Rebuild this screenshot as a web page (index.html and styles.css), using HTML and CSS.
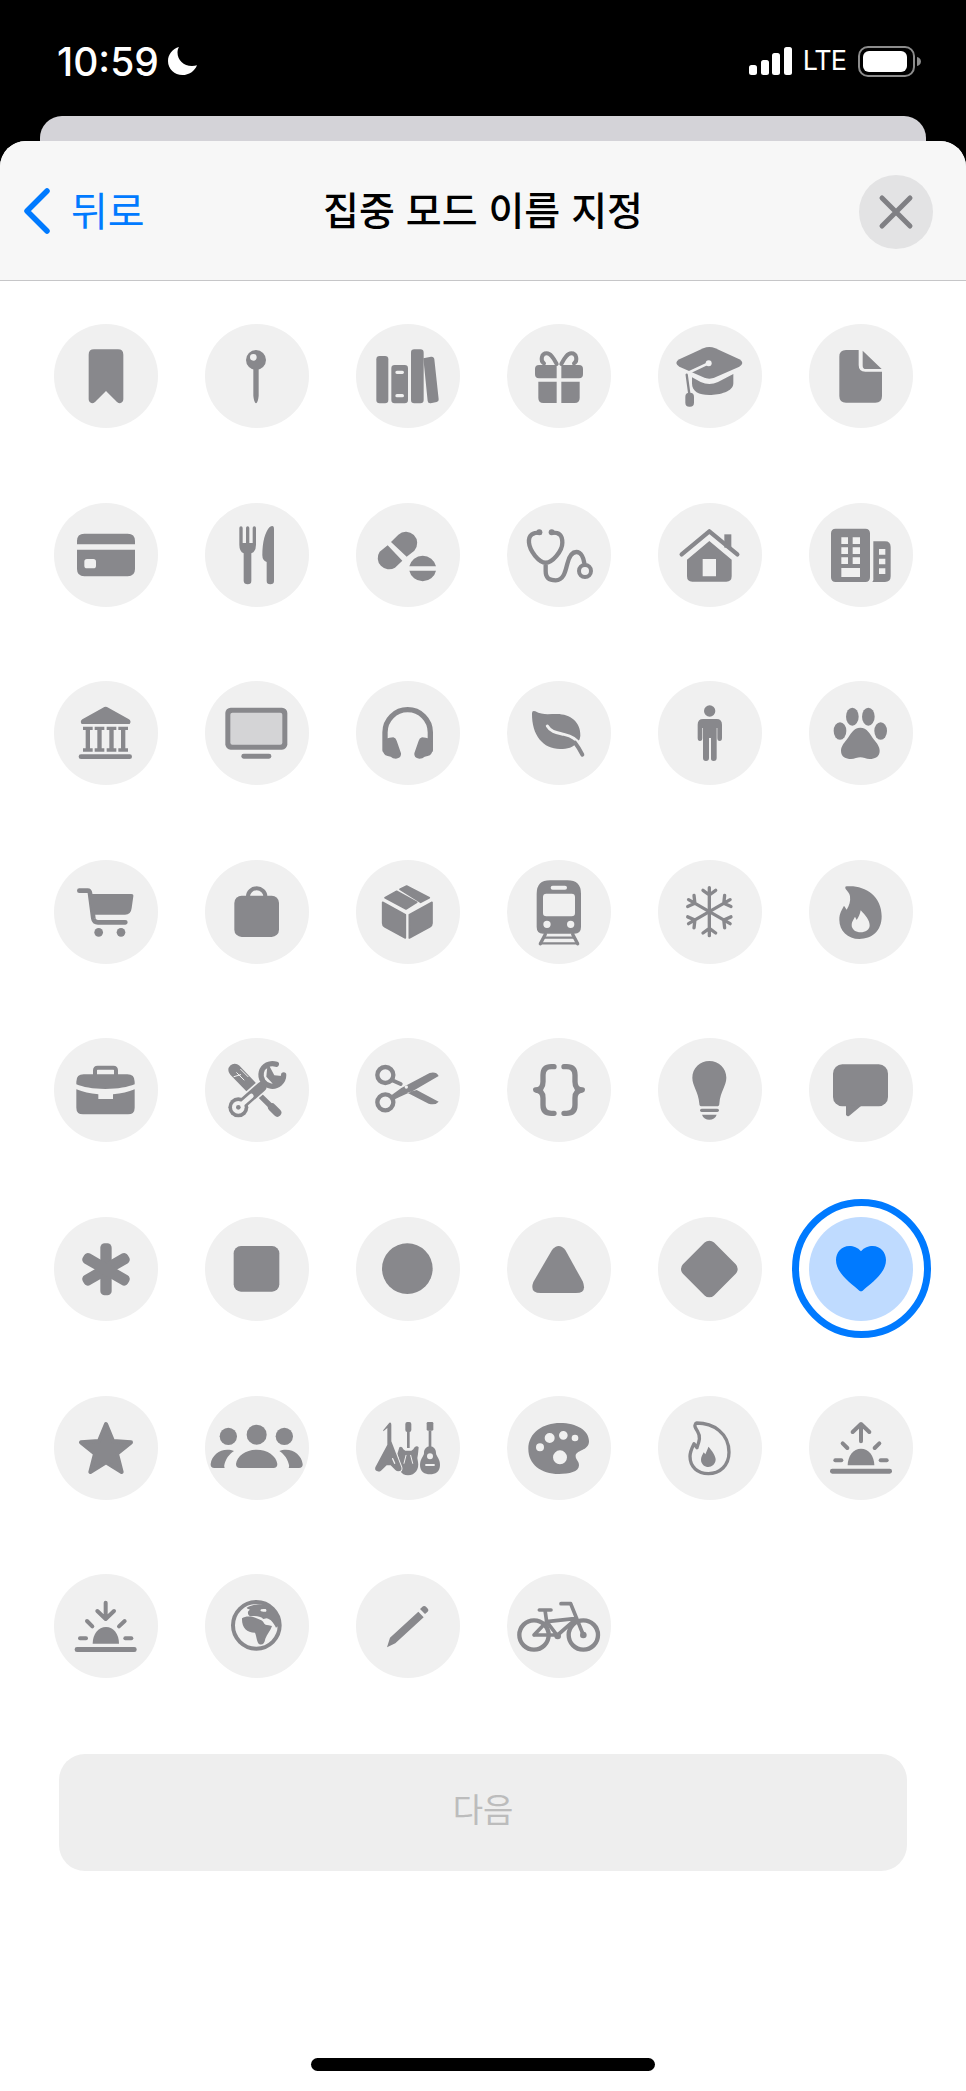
FILE: index.html
```html
<!DOCTYPE html>
<html lang="ko">
<head>
  <meta charset="UTF-8" />
  <title>집중 모드 이름 지정</title>
  <link rel="stylesheet" href="styles.css">
</head>
<body>
  <!-- status bar -->
  <div class="status">
    <div class="status-left">
      <span class="time">10:59</span>
      <svg class="moon" viewBox="0 0 30 28"><path d="M11 0C4.500 1.800 0 7.500 0 14c0 8 6.500 14 14.500 14 6.500 0 12-3.800 14.500-9.800-1.500.5-3.200.8-5 .8C15.500 19 9.500 13 9.500 5.500c0-2 .5-3.900 1.500-5.500z"/></svg>
    </div>
    <div class="status-right">
      <svg class="signal" viewBox="0 0 43 28">
        <rect x="0" y="18" width="8" height="10" rx="2.500"/>
        <rect x="12" y="13" width="8" height="15" rx="2.500"/>
        <rect x="23" y="6" width="8" height="22" rx="2.500"/>
        <rect x="35" y="0" width="8" height="28" rx="2.500"/>
      </svg>
      <span class="lte">LTE</span>
      <svg class="battery" viewBox="0 0 63 31">
        <rect x="1" y="1" width="55" height="29" rx="9" fill="none" stroke="#8c8c8c" stroke-width="2"/>
        <rect x="5" y="5" width="44" height="21" rx="6" fill="#fff"/>
        <path d="M59 11c2 .5 4 2 4 4.500S61 19.500 59 20z" fill="#8c8c8c"/>
      </svg>
    </div>
  </div>

  <div class="back-card"></div>

  <div class="sheet">
    <div class="header">
      <a class="back" href="#">
        <svg class="chevron" viewBox="0 0 28 46"><path d="M24 3L4 23l20 20"/></svg>
        <span>뒤로</span>
      </a>
      <div class="title">집중 모드 이름 지정</div>
      <div class="close-slot">
        <div class="close">
          <svg viewBox="0 0 74 74"><path d="M23 23l28 28M51 23L23 51"/></svg>
        </div>
      </div>
    </div>

    <div class="icons">
      <!-- row 1 -->
      <div class="icon"><svg viewBox="71 72 312 312"><path d="M175 164q0-16 16-16h72q16 0 16 16v134c0 11-11 15-19 8l-33-33-33 33c-8 7-19 3-19-8z"/></svg></div>
      <div class="icon"><svg viewBox="525 72 312 312"><path fill-rule="evenodd" d="M678 150a30 30 0 1 1 0 60 30 30 0 1 1 0-60zM670 162a10 10 0 1 0 0 20 10 10 0 1 0 0-20z"/><path d="M670 205v80c0 10 4 25 8 25s8-15 8-25v-80z"/></svg></div>
      <div class="icon"><svg viewBox="978 72 312 312"><rect x="1039" y="168" width="36" height="142" rx="10"/><path fill-rule="evenodd" d="M1094 195h30q10 0 10 10v95q0 10-10 10h-30q-10 0-10-10v-95q0-10 10-10zM1101 212q-5 0-5 5t5 5h16q5 0 5-5t-5-5zM1101 282q-5 0-5 5t5 5h16q5 0 5-5t-5-5z"/><rect x="1143" y="148" width="38" height="162" rx="10"/><path d="M1180 175l23-5q9-1 10 8l13 120q1 7-6 8l-18 4q-8 1-9-7z"/></svg></div>
      <div class="icon"><svg viewBox="81 72 312 312"><path class="line w12" d="M230 192c-8-14-16-32-30-32-16 0-20 22-8 30M244 192c8-14 16-32 30-32 16 0 20 22 8 30"/><path d="M177 195h53v40h-53q-12 0-12-12v-16q0-12 12-12zM244 195h53q12 0 12 12v16q0 12-12 12h-53zM175 245h55v64h-40q-15 0-15-15zM244 245h55v49q0 15-15 15h-40z"/></svg></div>
      <div class="icon"><svg viewBox="534 72 312 312"><path d="M670 145q18-8 36 0l72 33q18 11 0 22l-72 32q-18 8-36 0l-72-32q-18-11 0-22z"/><path d="M636 232l26 14q26 12 52 0l46-24v28c0 25-40 35-72 35s-52-10-52-35z"/><path class="cut-line w8" d="M685 190l-68 32"/><circle class="cut" cx="686" cy="190" r="9"/><path class="line w7" d="M620 224l8 58"/><rect x="616" y="278" width="26" height="42" rx="12"/></svg></div>
      <div class="icon"><svg viewBox="987 72 312 312"><path d="M1078 170q0-20 20-20h38v45q0 20 20 20h50v73q0 20-20 20h-88q-20 0-20-20zM1148 152l57 55h-47q-10 0-10-10z"/></svg></div>

      <!-- row 2 -->
      <div class="icon"><svg viewBox="71 608 312 312"><path fill-rule="evenodd" d="M140 732v-10q0-22 22-22h130q22 0 22 22v10zM140 748h174v58q0 22-22 22H162q-22 0-22-22zM170 776q-8 0-8 8v12q0 8 8 8h19q8 0 8-8v-12q0-8-8-8z"/></svg></div>
      <div class="icon"><svg viewBox="525 608 312 312"><path d="M628 683q0-5 5-5t5 5v45h10v-45q0-5 5-5t5 5v45h10v-45q0-5 5-5t5 5v50q0 20-14 26v83q0 10-11 10t-12-10v-83q-13-6-13-26zM732 686v156q0 10-11 10t-11-10v-57q-13-5-13-20c0-40 8-70 22-85q13-8 13 6z"/></svg></div>
      <div class="icon"><svg viewBox="978 608 312 312"><path d="M1083 725l22-22a34 34 0 0 1 48 48l-23 18zM1073 735l44 46-22 21a34 34 0 0 1-46-48zM1138 798a41 41 0 0 1 80 0zM1138 811h80a41 41 0 0 1-80 0z"/></svg></div>
      <div class="icon"><svg viewBox="81 608 312 312"><path class="line w13" d="M180 697c-20 0-35 5-33 30 2 25 30 60 50 60s50-35 50-60c0-25-10-30-30-30M197 787v25c0 25 15 28 30 28 25 0 30-30 35-50s12-35 27-35c15 0 22 20 24 33"/><circle cx="178" cy="696" r="9"/><circle cx="215" cy="696" r="9"/><circle class="line w12" cx="315" cy="812" r="18"/></svg></div>
      <div class="icon"><svg viewBox="534 608 312 312"><rect x="733" y="702" width="21" height="40"/><path class="line w13" d="M605 762l83-69 84 69"/><path fill-rule="evenodd" d="M688 722l67 56v50q0 16-16 16H637q-16 0-16-16v-50zM668 776v52h40v-52z"/></svg></div>
      <div class="icon"><svg viewBox="987 608 312 312"><path fill-rule="evenodd" d="M1067 685h89q14 0 14 14v132q0 14-14 14h-89q-14 0-14-14V699q0-14 14-14zM1084 711v20h20v-20zM1118 711v20h22v-20zM1084 741v20h20v-20zM1118 741v20h22v-20zM1084 771v20h20v-20zM1118 771v20h22v-20zM1084 803v27h56v-27zM1180 723h35q17 0 17 17v88q0 17-17 17h-38q5-5 3-12zM1197 746v17h19v-17zM1197 775v17h19v-17zM1197 804v17h19v-17z"/></svg></div>

      <!-- row 3 -->
      <div class="icon"><svg viewBox="71 63 312 312"><path d="M226 140q4 0 8 3l62 35q8 6 2 14H154q-6-8 2-14l62-35q4-3 8-3z"/><rect x="145" y="283" width="160" height="14" rx="7"/><path d="M158 200h29v10h-8v55h8v10h-29v-10h8v-55h-8zM193 200h29v10h-8v55h8v10h-29v-10h8v-55h-8zM229 200h29v10h-8v55h8v10h-29v-10h8v-55h-8zM264 200h29v10h-8v55h8v10h-29v-10h8v-55h-8z"/></svg></div>
      <div class="icon"><svg viewBox="525 63 312 312"><rect x="586" y="143" width="186" height="126" rx="16"/><rect class="screen" x="601" y="158" width="156" height="96" rx="6"/><rect x="634" y="281" width="90" height="15" rx="7"/></svg></div>
      <div class="icon"><svg viewBox="978 63 312 312"><path class="line w16" d="M1065 270v-53a68 68 0 0 1 136 0v53"/><path d="M1060 245q5-12 30-13 8 2 10 10l13 38q2 14-15 16-10 0-16-6-20-2-22-14zM1206 245q-5-12-30-13-8 2-10 10l-13 38q-2 14 15 16 10 0 16-6 20-2 22-14z"/></svg></div>
      <div class="icon"><svg viewBox="81 63 312 312"><path d="M156 160q0-10 10-6c20 12 40 8 65 8 40 0 72 25 70 65-1 10-4 15-8 18-14 18-30 22-53 22-50 0-85-40-84-107z"/><path class="cut-line w9" d="M202 198c10 18 30 20 50 25 25 6 36 14 50 32"/><path class="line w12" d="M285 248c8 10 15 22 22 36"/></svg></div>
      <div class="icon"><svg viewBox="534 63 312 312"><circle cx="689" cy="153" r="17"/><path d="M668 177h42q16 0 16 17v40q0 9-7 9t-7-9v-30h-2v90q0 9-9 9t-8-9v-60h-6v60q0 9-9 9t-9-9v-90h-2v30q0 9-7 9t-7-9v-40q0-17 16-17z"/></svg></div>
      <div class="icon"><svg viewBox="987 63 312 312"><ellipse cx="1117" cy="170" rx="19" ry="27"/><ellipse cx="1165" cy="170" rx="19" ry="27"/><ellipse cx="1080" cy="213" rx="19" ry="26"/><ellipse cx="1202" cy="213" rx="19" ry="26"/><path d="M1141 203c20 0 30 20 40 35 10 12 18 22 18 35 0 18-15 24-30 24-10 0-20-5-28-5s-18 5-28 5c-15 0-30-6-30-24 0-13 8-23 18-35 10-15 20-35 40-35z"/></svg></div>

      <!-- row 4 -->
      <div class="icon"><svg viewBox="71 599 312 312"><path class="line w14" d="M147 691h25q6 0 7 8l10 75q2 12 14 12h82"/><path d="M178 701h125q7 0 6 7l-5 35q-2 20-20 20h-98z"/><circle cx="205" cy="816" r="13"/><circle cx="272" cy="816" r="13"/></svg></div>
      <div class="icon"><svg viewBox="525 599 312 312"><rect x="613" y="706" width="134" height="124" rx="22"/><path class="line w12" d="M654 708a26 24 0 0 1 52 0"/></svg></div>
      <div class="icon"><svg viewBox="978 599 312 312"><path class="solid-join" d="M1065 712l35-19 60 33-32 20zM1110 687l20-10 68 35-26 14zM1058 726l68 37v70l-62-34q-6-3-6-10zM1138 763l68-37v63q0 7-6 10l-62 34z"/></svg></div>
      <div class="icon"><svg viewBox="81 599 312 312"><path fill-rule="evenodd" d="M170 700q0-40 40-40h52q41 0 41 40v100q0 20-20 20h-94q-19 0-19-20zM218 676q-6 0-6 6t6 6h37q6 0 6-6t-6-6zM199 700q-10 0-10 10v48q0 10 10 10h76q10 0 10-10v-48q0-10-10-10zM201 781a11 11 0 1 0 0 22 11 11 0 1 0 0-22zM272 781a11 11 0 1 0 0 22 11 11 0 1 0 0-22z"/><path class="line w10" d="M196 822l-15 28M278 822l15 28"/><path class="line w7" d="M192 832h90M182 849h110"/></svg></div>
      <div class="icon"><svg viewBox="534 599 312 312">
        <g class="line w10">
          <g id="spoke"><path d="M688 754v-72M688 704l-19-14M688 704l19-14"/></g>
          <use href="#spoke" transform="rotate(60 688 754)"/>
          <use href="#spoke" transform="rotate(120 688 754)"/>
          <use href="#spoke" transform="rotate(180 688 754)"/>
          <use href="#spoke" transform="rotate(240 688 754)"/>
          <use href="#spoke" transform="rotate(300 688 754)"/>
        </g>
      </svg></div>
      <div class="icon"><svg viewBox="987 599 312 312"><path fill-rule="evenodd" d="M1100 678c50-5 105 25 105 90 0 45-30 68-67 68-35 0-60-25-60-58 0-20 8-30 14-42l8 12c8-12 12-25 10-40-2-12-12-18-14-24q-2-6 4-6zM1142 750c15 15 27 30 27 45 0 14-13 21-27 21s-27-8-27-22c0-10 5-15 10-25l5 10c6-8 10-18 12-29z"/></svg></div>

      <!-- row 5 -->
      <div class="icon"><svg viewBox="71 54 312 312"><path class="line w12" d="M194 165v-14q0-8 8-8h47q8 0 8 8v14"/><path d="M138 185q0-22 22-22h131q22 0 22 22v8c-20 8-50 14-88 14s-68-6-87-14zM138 208c20 8 40 12 66 15v14h44v-14c26-3 46-7 65-15v55q0 20-20 20H158q-20 0-20-20z"/></svg></div>
      <div class="icon"><svg viewBox="525 54 312 312"><path class="line w38" d="M614 150l48 50"/><path class="cut-line w3" d="M612 170l20-6M620 158l22 22M632 148l22 22"/><path class="line w16" d="M664 201l58 57"/><path class="line w24" d="M726 262l16 16"/><path class="cut-line w40" d="M695 200l-70 62"/><path class="line w30" d="M695 200l-70 62"/><circle cx="625" cy="262" r="30"/><circle class="cut" cx="625" cy="262" r="19"/><path class="cut-line w14" d="M664 228l-32 28"/><circle cx="625" cy="262" r="7"/><path class="line w16" d="M739 133a34 34 0 1 0 22 32"/><path d="M713 128l20 38 22 2-4 18-20 8-22-24z"/></svg></div>
      <div class="icon"><svg viewBox="978 54 312 312"><circle class="line w13" cx="1066" cy="165" r="24"/><circle class="line w13" cx="1066" cy="247" r="24"/><path class="line w12" d="M1085 180l27 12"/><path fill-rule="evenodd" d="M1090 240l-6-14 30-22 85-45q20-5 27 9l-76 44-40 18zM1129 196a5 5 0 1 0 0 10 5 5 0 1 0 0-10zM1132 218l28-8 66 35q-10 12-30 6z"/></svg></div>
      <div class="icon"><svg viewBox="81 54 312 312"><path class="line w16" d="M222 140h-8q-25 0-25 25v20q0 24-22 25 22 1 22 25v20q0 25 25 25h8M252 140h8q25 0 25 25v20q0 24 22 25-22 1-22 25v20q0 25-25 25h-8"/></svg></div>
      <div class="icon"><svg viewBox="534 54 312 312"><path d="M688 123c28 0 51 22 51 50 0 25-18 40-21 78q0 8-8 8h-44q-8 0-8-8c-3-38-21-53-21-78 0-28 23-50 51-50z"/><rect x="660" y="266" width="57" height="10" rx="5"/><path d="M666 284h44c-3 10-12 15-22 15s-19-5-22-15z"/></svg></div>
      <div class="icon"><svg viewBox="987 54 312 312"><rect x="1059" y="133" width="165" height="126" rx="28"/><path d="M1098 255v28q2 9 10 4l36-30z"/></svg></div>

      <!-- row 6 -->
      <div class="icon"><svg viewBox="71 589 312 312"><rect x="210" y="668" width="34" height="156" rx="13"/><rect x="210" y="668" width="34" height="156" rx="13" transform="rotate(60 227 746)"/><rect x="210" y="668" width="34" height="156" rx="13" transform="rotate(120 227 746)"/></svg></div>
      <div class="icon"><svg viewBox="525 589 312 312"><rect x="611" y="676" width="137" height="137" rx="22"/></svg></div>
      <div class="icon"><svg viewBox="978 589 312 312"><circle cx="1132" cy="744" r="76"/></svg></div>
      <div class="icon"><svg viewBox="81 589 312 312"><path d="M216 688q20-24 40 0l52 94q14 35-20 35H182q-34 0-22-33z"/></svg></div>
      <div class="icon"><svg viewBox="534 589 312 312"><rect x="622" y="679" width="132" height="132" rx="20" transform="rotate(45 688 745)"/></svg></div>
      <div class="icon selected"><svg viewBox="987 589 312 312"><path d="M1143 692c10-12 22-16 35-16 24 0 40 20 40 42 0 40-45 70-70 92q-5 4-10 0c-25-22-70-52-70-92 0-22 16-42 40-42 13 0 25 4 35 16z"/></svg></div>

      <!-- row 7 -->
      <div class="icon"><svg viewBox="71 44 312 312"><path class="solid-join big" d="M227 128l21 51 54 4-42 34 14 55-47-29-47 29 14-55-42-34 54-4z"/></svg></div>
      <div class="icon"><svg viewBox="525 44 312 312"><circle cx="595" cy="165" r="26"/><circle cx="680" cy="160" r="30"/><circle cx="763" cy="165" r="26"/><path d="M630 260q-12 0-12-12c3-25 30-43 62-43s59 18 62 43q0 12-12 12zM553 260q-12 0-11-12c3-25 25-43 50-43 8 0 14 1 20 4-15 10-26 25-29 42q-1 5 1 9zM807 260q12 0 11-12c-3-25-25-43-50-43-8 0-14 1-20 4 15 10 26 25 29 42q1 5-1 9z"/></svg></div>
      <div class="icon"><svg viewBox="978 44 312 312"><rect x="1126" y="122" width="18" height="30" rx="6"/><rect x="1131" y="150" width="8" height="50"/><path d="M1108 198q8-6 12 6l6 4h18l6-4c4-10 12-12 16-6l-2 20q-4 12 0 24c4 20-8 40-30 40s-30-20-28-40q2-12-4-24z"/><path class="cut-line w3" d="M1128 222l-6 24M1142 222l6 24"/><path class="halo" d="M1072 190v-50l-12 10q-2-3 2-6l16-20q6-2 6 6v50l30 78q3 12-9 12-5 0-9-4l-14-14h-12l-17 16q-5 4-10 2-10-2-7-12z"/><path class="cut-line w4" d="M1088 232l6 14"/><rect x="1190" y="122" width="20" height="26" rx="4"/><rect x="1196" y="148" width="8" height="50"/><path fill-rule="evenodd" d="M1200 195c11 0 18 9 18 20 0 10 12 16 12 36 0 20-14 28-30 28s-30-8-30-28c0-20 12-26 12-36 0-11 7-20 18-20zM1200 216a9 9 0 1 0 0 18 9 9 0 1 0 0-18zM1186 248v6h28v-6z"/></svg></div>
      <div class="icon"><svg viewBox="81 44 312 312"><path fill-rule="evenodd" d="M240 125c50 0 87 22 87 55 0 30-40 25-40 45 0 10 10 15 10 27 0 20-30 26-60 26-55 0-92-30-92-75 0-50 45-78 95-78zM209 155a15 15 0 1 0 0 30 15 15 0 1 0 0-30zM250 149a13 13 0 1 0 0 26 13 13 0 1 0 0-26zM285 160a10 10 0 1 0 0 20 10 10 0 1 0 0-20zM180 186a12 12 0 1 0 0 24 12 12 0 1 0 0-24zM240 207a21 21 0 1 0 0 42 21 21 0 1 0 0-42z"/></svg></div>
      <div class="icon"><svg viewBox="534 44 312 312"><path class="line w10" d="M650 125c50 0 97 30 97 88 0 40-28 64-62 64-32 0-55-20-55-52 0-15 8-30 12-38l9 12c6-18 12-32 2-48-6-10-10-15-8-20q2-6 5-6z"/><path d="M685 196c10 10 22 28 22 38 0 15-12 23-22 23s-22-8-22-22c0-8 4-14 8-22l5 6c3-8 7-15 9-23z"/></svg></div>
      <div class="icon"><svg viewBox="987 44 312 312"><rect x="1050" y="262" width="186" height="15" rx="7"/><path d="M1103 252c0-28 17-50 40-50s40 22 40 50z"/><rect x="1060" y="231" width="30" height="12" rx="6"/><rect x="1196" y="231" width="30" height="12" rx="6"/><path class="line w12" d="M1088 186l14 14M1198 186l-14 14M1143 180v-50M1118 152l25-24 25 24"/></svg></div>

      <!-- row 8 -->
      <div class="icon"><svg viewBox="71 579 312 312"><rect x="133" y="798" width="186" height="15" rx="7"/><path d="M187 788c0-28 17-50 40-50s39 22 39 50z"/><rect x="143" y="766" width="30" height="12" rx="6"/><rect x="279" y="766" width="30" height="12" rx="6"/><path class="line w12" d="M170 720l16 16M283 720l-17 16M226 665v47M201 690l25 24 25-24"/></svg></div>
      <div class="icon"><svg viewBox="525 579 312 312"><circle class="line w12" cx="679" cy="733" r="70"/><path fill-rule="evenodd" d="M650 680c25-14 55-14 75 0 15 10 25 30 27 50l-14 10c-8-15-15-25-28-28l-10 2c-10-10-25-10-40-8-8-5-8-15-2-18 5-4-8-4-8-8zM700 684q-9 0-9 4t9 4h8q3-4-1-8z"/><path d="M636 712c10-8 30-6 40-2l18 8c10 5 5 15 22 15l10 2c-5 15-15 25-20 38-3 15-8 20-18 17-8-5-8-25-13-35-25 0-40-15-39-43z"/></svg></div>
      <div class="icon"><svg viewBox="978 579 312 312"><path d="M1071 799l9-29 85-78 16 17-85 78zM1170 684l9-8q5-3 9 1l6 7q3 4-1 8l-8 7z"/></svg></div>
      <div class="icon"><svg viewBox="81 579 312 312"><circle class="line w13" cx="162" cy="762" r="44"/><circle class="line w13" cx="310" cy="762" r="44"/><path class="line w11" d="M162 762h71l57-50-90 10 33 43M200 722l-38 40M310 762l-38-94h-29M178 687h35M195 687l5 35"/><circle cx="310" cy="762" r="10"/><circle cx="233" cy="765" r="10"/></svg></div>
    </div>

    <div class="next">다음</div>
    <div class="home-bar"></div>
  </div>
</body>
</html>
```

FILE: styles.css
```css
/* page */
* {
  box-sizing: border-box;
}

body {
  margin: 0;
  width: 966px;
  height: 2091px;
  overflow: hidden;
  background-color: #000;
  font-family: "Noto Sans CJK KR", "Noto Sans", sans-serif;
}

/* status bar */
.status {
  display: flex;
  justify-content: space-between;
  height: 116px;
  padding: 38px 45px 0 57px;
  color: #fff;
}

.status-left {
  display: flex;
  align-items: center;
  gap: 9px;
  height: 46px;
}

.time {
  margin-top: 2px;
  font-family: Inter, "Liberation Sans", sans-serif;
  font-size: 39px;
  font-weight: 500;
  line-height: 46px;
}

.moon {
  width: 30px;
  height: 28px;
  fill: #fff;
}

.status-right {
  display: flex;
  align-items: center;
  height: 46px;
}

.signal {
  width: 43px;
  height: 28px;
  fill: #fff;
}

.lte {
  margin-left: 11px;
  font-family: Inter, "Liberation Sans", sans-serif;
  font-size: 27px;
  line-height: 46px;
  letter-spacing: -1px;
}

.battery {
  width: 63px;
  height: 31px;
  margin-left: 12px;
}

/* sheet behind */
.back-card {
  height: 25px;
  margin: 0 40px;
  background-color: #d4d3d8;
  border-radius: 22px 22px 0 0;
}

/* main sheet */
.sheet {
  display: flex;
  flex-direction: column;
  height: 1950px;
  background-color: #fff;
  border-radius: 26px 26px 0 0;
  overflow: hidden;
}

.header {
  display: grid;
  grid-template-columns: 200px 1fr 200px;
  align-items: center;
  height: 140px;
  padding: 0 33px;
  background-color: #f7f7f7;
  border-bottom: 1px solid #c6c6c8;
}

.back {
  display: flex;
  align-items: center;
  gap: 20px;
  margin-left: -10px;
  color: #007aff;
  font-size: 40px;
  text-decoration: none;
}

.back span {
  padding-bottom: 4px;
}

.chevron {
  width: 28px;
  height: 46px;
  fill: none;
  stroke: #007aff;
  stroke-width: 5.5;
  stroke-linecap: round;
  stroke-linejoin: round;
}

.title {
  padding-bottom: 6px;
  text-align: center;
  color: #000;
  font-size: 39px;
  font-weight: 500;
  white-space: nowrap;
}

.close-slot {
  display: flex;
  justify-content: flex-end;
}

.close {
  width: 74px;
  height: 74px;
  margin-top: 3px;
  background-color: #e3e3e4;
  border-radius: 50%;
}

.close svg {
  display: block;
  fill: none;
  stroke: #808084;
  stroke-width: 5;
  stroke-linecap: round;
}

/* icon grid */
.icons {
  display: grid;
  grid-template-columns: repeat(6, 104px);
  column-gap: 47px;
  row-gap: 74.6px;
  padding: 43px 0 0 54px;
}

.icon {
  position: relative;
  width: 104px;
  height: 104px;
  background-color: #f0f0f0;
  border-radius: 50%;
}

.icon svg {
  display: block;
  width: 104px;
  height: 104px;
  fill: #88888c;
}

.icon.selected {
  background-color: #bfdbff;
}

.icon.selected svg {
  fill: #007aff;
}

.icon.selected::after {
  content: "";
  position: absolute;
  inset: -17.5px;
  border: 7.5px solid #007aff;
  border-radius: 50%;
}

/* svg helpers */
.icon svg .line {
  fill: none;
  stroke: #88888c;
  stroke-linecap: round;
  stroke-linejoin: round;
}

.icon svg .cut {
  fill: #f0f0f0;
}

.icon svg .cut-line {
  fill: none;
  stroke: #f0f0f0;
  stroke-linecap: round;
}

.icon svg .screen {
  fill: #d4d4d6;
}

.icon svg .halo {
  stroke: #f0f0f0;
  stroke-width: 6;
  paint-order: stroke;
}

.icon svg .solid-join {
  stroke: #88888c;
  stroke-width: 5;
  stroke-linejoin: round;
}

.icon svg .solid-join.big {
  stroke-width: 12;
}

.w3 { stroke-width: 3; }
.w4 { stroke-width: 4; }
.w7 { stroke-width: 7; }
.w8 { stroke-width: 8; }
.w9 { stroke-width: 9; }
.w10 { stroke-width: 10; }
.w11 { stroke-width: 11; }
.w12 { stroke-width: 12; }
.w13 { stroke-width: 13; }
.w14 { stroke-width: 14; }
.w16 { stroke-width: 16; }
.w24 { stroke-width: 24; }
.w30 { stroke-width: 30; }
.w38 { stroke-width: 38; }
.w40 { stroke-width: 40; }

/* next button */
.next {
  display: flex;
  align-items: center;
  justify-content: center;
  height: 117px;
  margin: 76px 59px 0;
  padding-bottom: 10px;
  background-color: #eeeeee;
  border-radius: 26px;
  color: #bcbcbc;
  font-size: 33px;
}

.home-bar {
  width: 344px;
  height: 13px;
  margin: auto auto 20px;
  background-color: #000;
  border-radius: 7px;
}
```
